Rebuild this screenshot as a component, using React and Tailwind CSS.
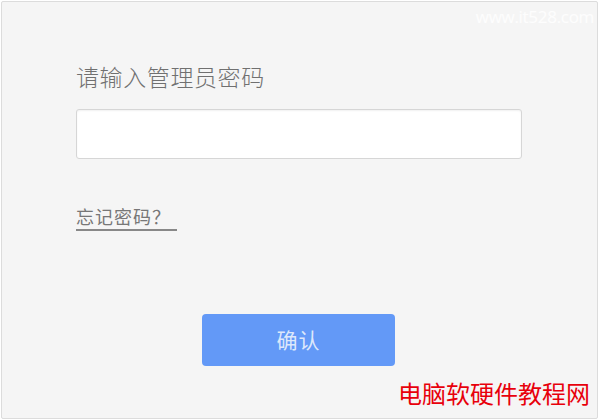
export default function App() {
  const font = { fontFamily: '"Noto Sans CJK SC", "Noto Sans", sans-serif' };
  return (
    <div className="w-[600px] h-[420px] bg-white relative overflow-hidden" style={font}>
      <div className="absolute left-[1px] top-[1px] w-[597px] h-[418px] border border-[#dcdcdc] rounded-[2px] bg-[#f5f5f5]">
        <div className="flex flex-col pl-[74px] pt-[58px]">
          <div className="text-[23px] leading-[32px] text-[#707070] tracking-[0.6px] font-light">请输入管理员密码</div>
          <div className="mt-[17px] w-[446px] h-[50px] bg-white border border-[#d6d6d6] rounded-[3px] shadow-[inset_0_1px_2px_rgba(0,0,0,0.06)]" />
          <div className="mt-[45px] self-start text-[18px] leading-[25px] text-[#777] tracking-[1px] border-b-2 border-[#888] pr-[6px]">忘记密码？</div>
          <div className="mt-[83px] ml-[126px] w-[193px] h-[52px] rounded-[4px] bg-[#6399f7] flex items-center justify-center text-[21px] text-[#dde8fb] tracking-[1px]">确认</div>
        </div>
        <div className="absolute right-[3px] top-[2px] text-[17px] text-white/80 tracking-[-0.3px]" style={{ fontFamily: '"Open Sans", sans-serif' }}>www.it528.com</div>
        <div className="absolute left-[396px] top-[374px] text-[24px] leading-[34px] text-[#e8000b]">电脑软硬件教程网</div>
      </div>
    </div>
  );
}
